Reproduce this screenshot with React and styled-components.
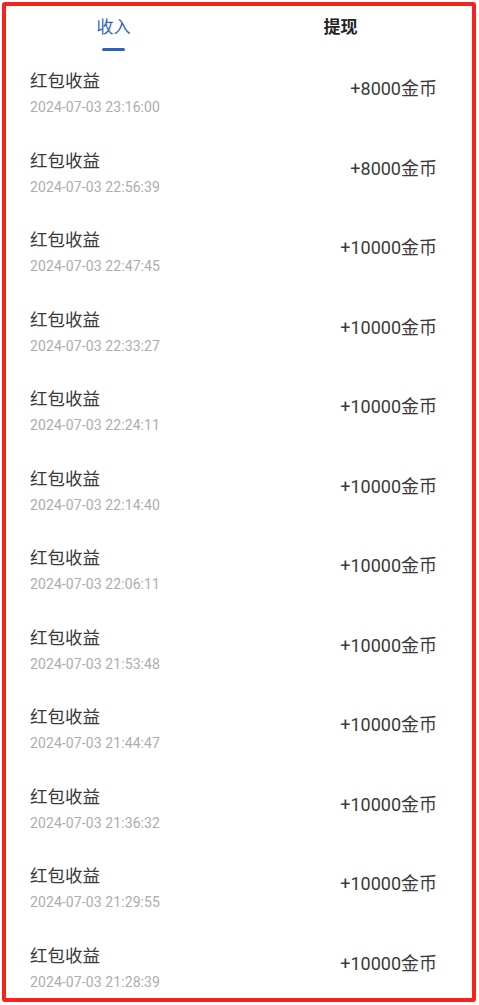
import styled, { createGlobalStyle } from "styled-components"

const GlobalStyle = createGlobalStyle`
    html, body {
        margin: 0;
        padding: 0;
        background: #fff;
    }
    body {
        font-family: Roboto, "Noto Sans CJK SC", sans-serif;
    }
`

const records = [
    ["2024-07-03 23:16:00", "+8000"],
    ["2024-07-03 22:56:39", "+8000"],
    ["2024-07-03 22:47:45", "+10000"],
    ["2024-07-03 22:33:27", "+10000"],
    ["2024-07-03 22:24:11", "+10000"],
    ["2024-07-03 22:14:40", "+10000"],
    ["2024-07-03 22:06:11", "+10000"],
    ["2024-07-03 21:53:48", "+10000"],
    ["2024-07-03 21:44:47", "+10000"],
    ["2024-07-03 21:36:32", "+10000"],
    ["2024-07-03 21:29:55", "+10000"],
    ["2024-07-03 21:28:39", "+10000"],
]

const App = () => {
    return (
        <>
            <GlobalStyle />
            <Frame>
                <TabBar>
                    <Tab>
                        <TabLabel active>收入</TabLabel>
                        <Underline />
                    </Tab>
                    <Tab>
                        <TabLabel>提现</TabLabel>
                    </Tab>
                </TabBar>
                <List>
                    {records.map(([time, amount]) => (
                        <Row key={time}>
                            <Info>
                                <Title>红包收益</Title>
                                <Time>{time}</Time>
                            </Info>
                            <Amount>{amount}金币</Amount>
                        </Row>
                    ))}
                </List>
            </Frame>
        </>
    )
}

export default App;

const Frame = styled.div`
    box-sizing: border-box;
    width: 474px;
    height: 1000px;
    margin: 2px;
    border: 4px solid #f7221b;
    border-radius: 3px;
    overflow: hidden;
    background: #fff;
`

const TabBar = styled.div`
    display: flex;
    height: 58px;
    margin-left: -6px;
    padding-right: 18px;
`

const Tab = styled.div`
    flex: 1;
    display: flex;
    flex-direction: column;
    align-items: center;
    padding-top: 10px;
`

const TabLabel = styled.div`
    font-size: 17px;
    line-height: 22px;
    font-weight: ${({active}) => active ? 400 : 700};
    color: ${({active}) => active ? "#2c63b6" : "#222"};
`

const Underline = styled.div`
    width: 23px;
    height: 3px;
    margin-top: 10px;
    border-radius: 2px;
    background: #2c63b6;
`

const List = styled.div`
    display: flex;
    flex-direction: column;
`

const Row = styled.div`
    box-sizing: border-box;
    height: 79.5px;
    display: flex;
    justify-content: space-between;
    align-items: flex-start;
    padding: 5px 35px 0 24px;
`

const Info = styled.div`
    display: flex;
    flex-direction: column;
`

const Title = styled.div`
    font-size: 17.5px;
    line-height: 24px;
    color: #383838;
`

const Time = styled.div`
    margin-top: 4px;
    font-size: 14px;
    line-height: 20px;
    letter-spacing: 0.1px;
    color: #adadad;
`

const Amount = styled.div`
    margin-top: 8px;
    font-size: 18px;
    line-height: 24px;
    color: #3a3a3a;
`
